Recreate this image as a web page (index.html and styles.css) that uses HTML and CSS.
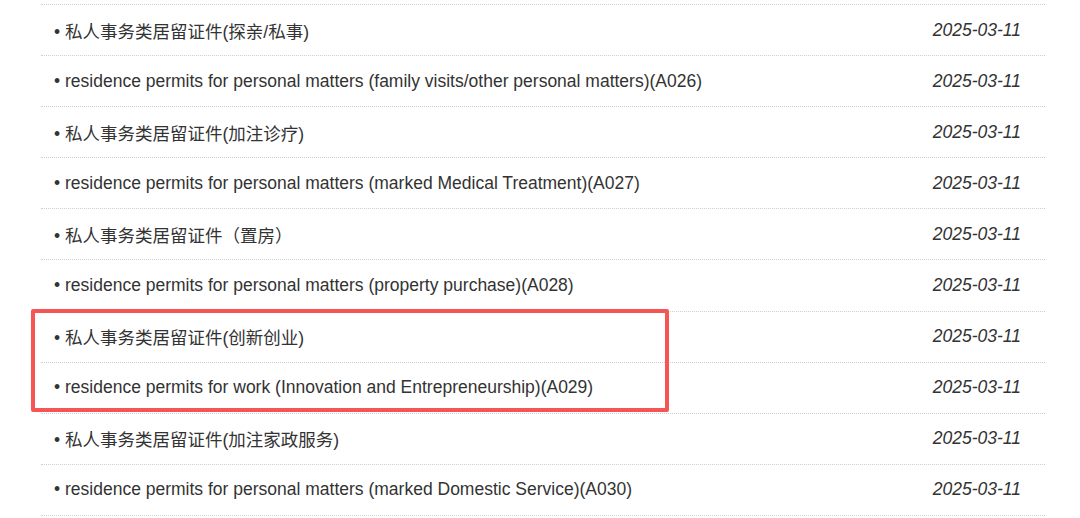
FILE: index.html
```html
<!DOCTYPE html>
<html lang="zh-CN">
<head>
  <meta charset="UTF-8" />
  <meta name="viewport" content="width=device-width, initial-scale=1" />
  <title>居留证件</title>
  <link rel="stylesheet" href="styles.css">
</head>
<body>
  <div class="page">
    <ul class="news-list">
      <li><span class="title">• 私人事务类居留证件(探亲/私事)</span><span class="date">2025-03-11</span></li>
      <li><span class="title">• residence permits for personal matters (family visits/other personal matters)(A026)</span><span class="date">2025-03-11</span></li>
      <li><span class="title">• 私人事务类居留证件(加注诊疗)</span><span class="date">2025-03-11</span></li>
      <li><span class="title">• residence permits for personal matters (marked Medical Treatment)(A027)</span><span class="date">2025-03-11</span></li>
      <li><span class="title">• 私人事务类居留证件（置房）</span><span class="date">2025-03-11</span></li>
      <li><span class="title">• residence permits for personal matters (property purchase)(A028)</span><span class="date">2025-03-11</span></li>
      <li><span class="title">• 私人事务类居留证件(创新创业)</span><span class="date">2025-03-11</span></li>
      <li><span class="title">• residence permits for work (Innovation and Entrepreneurship)(A029)</span><span class="date">2025-03-11</span></li>
      <li><span class="title">• 私人事务类居留证件(加注家政服务)</span><span class="date">2025-03-11</span></li>
      <li><span class="title">• residence permits for personal matters (marked Domestic Service)(A030)</span><span class="date">2025-03-11</span></li>
    </ul>
    <div class="highlight"></div>
  </div>
</body>
</html>
```

FILE: styles.css
```css
body {
  margin: 0;
  background: #fff;
  font-family: "Liberation Sans", Arial, "Noto Sans CJK SC", sans-serif;
  color: #333;
}
.page {
  position: relative;
  padding-top: 4px;
}
.news-list {
  list-style: none;
  margin: 0 0 0 41px;
  padding: 0;
  width: 1004px;
  border-top: 1px dotted #d0d0d0;
}
.news-list li {
  display: flex;
  align-items: center;
  justify-content: space-between;
  height: 50.1px;
  padding: 0 24px 0 13px;
  border-bottom: 1px dotted #d0d0d0;
  font-size: 17.5px;
}
.date {
  font-style: italic;
}
.highlight {
  position: absolute;
  left: 31px;
  top: 309px;
  width: 638px;
  height: 103px;
  box-sizing: border-box;
  border: 4px solid #f55555;
  border-radius: 2px;
}
```
